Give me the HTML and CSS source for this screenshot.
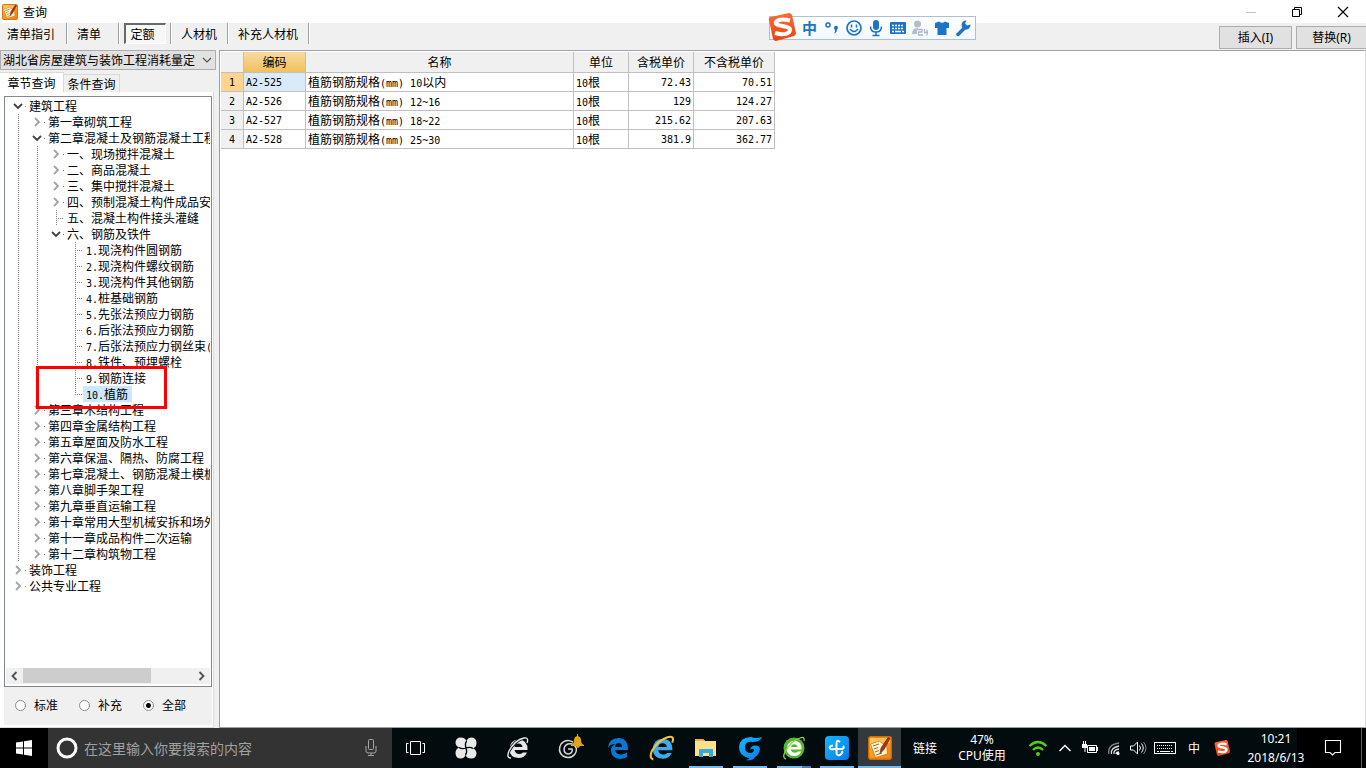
FILE: index.html
```html
<!DOCTYPE html>
<html lang="zh-CN">
<head>
<meta charset="utf-8">
<title>查询</title>
<link rel="stylesheet" href="styles.css">
</head>
<body>
<svg class="defs" aria-hidden="true">
  <defs>
    <linearGradient id="gOrange" x1="0" y1="0" x2="1" y2="1"><stop offset="0" stop-color="#ffb91a"/><stop offset="1" stop-color="#f08010"/></linearGradient>
    <linearGradient id="gRed" x1="0" y1="0" x2="0" y2="1"><stop offset="0" stop-color="#fc6a35"/><stop offset="1" stop-color="#ea4310"/></linearGradient>
    <linearGradient id="gBlue" x1="0" y1="0" x2="1" y2="1"><stop offset="0" stop-color="#12b7ff"/><stop offset="1" stop-color="#0b7ae8"/></linearGradient>
    <symbol id="note" viewBox="0 0 24 24">
      <rect x="0.7" y="0.7" width="22.6" height="22.6" rx="2" fill="url(#gOrange)" stroke="#d9660f" stroke-width="1.4"/>
      <path d="M2 2h20v5L2 12z" fill="#ffe08a" opacity=".5"/>
      <path d="M2.500 8l9-3 2 2 5 1 1 10-12 3.500z" fill="#fff3d2" stroke="#c96d15" stroke-width=".7"/>
      <path d="M5 10l6-2M6 13l4-1.500M7 16l4-1.500M8 19l6-2" stroke="#9c6a35" stroke-width="1"/>
      <path d="M20 1.500l2 1-6 11-4 4 1-5.500z" fill="#a8330f" stroke="#6a1d08" stroke-width=".6"/>
    </symbol>
    <symbol id="sogou" viewBox="0 0 28 28">
      <path d="M1 7Q0 5 3 4L21 0Q23 0 24 2L28 20Q28 22 26 23L8 28Q6 28 5 26Z" fill="url(#gRed)"/>
      <path d="M22 7.500Q11 5 8 9C6 14 22 12 22 17C21 22 13 22 7 20" fill="none" stroke="#fff" stroke-width="4"/>
    </symbol>
    <symbol id="right" viewBox="0 0 10 10"><path d="M3 1l4 4-4 4" fill="none" stroke="#a3a3a3" stroke-width="1.8"/></symbol>
    <symbol id="down" viewBox="0 0 10 10"><path d="M1 3l4 4 4-4" fill="none" stroke="#404040" stroke-width="1.8"/></symbol>
    <symbol id="ering" viewBox="0 0 24 24">
      <path d="M21.500 14H8.500Q9.500 18 13 18Q15.500 18 17 16.500H21Q18.500 22 12.500 22Q3.500 21.500 3.500 13Q4 4 12.500 3.500Q22 4 21.500 14ZM8.500 11H16.500Q16 7.500 12.500 7.500Q9 7.500 8.500 11Z" fill-rule="evenodd"/>
    </symbol>
  </defs>
</svg>

<header class="titlebar">
  <svg class="app-icon"><use href="#note"/></svg>
  <h1>查询</h1>
  <div class="win-controls">
    <button aria-label="最小化"><svg width="12" height="12"><path d="M1 6.500h10" stroke="#c4c4c4"/></svg></button>
    <button aria-label="还原"><svg width="12" height="12"><path d="M1.500 3.500h7v7h-7zM3.500 3.500v-2h7v7h-2" fill="none" stroke="#000"/></svg></button>
    <button aria-label="关闭"><svg width="12" height="12"><path d="M1 1l10 10M11 1L1 11" stroke="#000" stroke-width="1.200"/></svg></button>
  </div>
</header>

<nav class="toolbar">
  <button class="tool first">清单指引</button>
  <button class="tool short">清单</button>
  <span class="tool-slot"><button class="pressed">定额</button></span>
  <button class="tool">人材机</button>
  <button class="tool">补充人材机</button>
  <div class="actions">
    <button>插入<span class="key">(I)</span></button>
    <button>替换<span class="key">(R)</span></button>
  </div>
</nav>

<main class="workspace">
  <aside class="side">
    <div class="combo">
      <select aria-label="定额库"><option>湖北省房屋建筑与装饰工程消耗量定</option></select>
      <svg width="10" height="10"><path d="M1 3l4 4 4-4" fill="none" stroke="#555" stroke-width="1.200"/></svg>
    </div>
    <div class="tabs">
      <button class="tab active">章节查询</button>
      <button class="tab">条件查询</button>
    </div>
    <section class="page">
      <div class="tree-box">
        <div class="tree-view">
        <ul class="tree">
          <li><div class="row"><span class="tg"><svg><use href="#down"/></svg></span><span class="lb">建筑工程</span></div>
            <ul class="line">
              <li><div class="row"><span class="tg"><svg><use href="#right"/></svg></span><span class="lb">第一章砌筑工程</span></div></li>
              <li><div class="row"><span class="tg"><svg><use href="#down"/></svg></span><span class="lb">第二章混凝土及钢筋混凝土工程</span></div>
                <ul class="line">
                  <li><div class="row"><span class="tg"><svg><use href="#right"/></svg></span><span class="lb">一、现场搅拌混凝土</span></div></li>
                  <li><div class="row"><span class="tg"><svg><use href="#right"/></svg></span><span class="lb">二、商品混凝土</span></div></li>
                  <li><div class="row"><span class="tg"><svg><use href="#right"/></svg></span><span class="lb">三、集中搅拌混凝土</span></div></li>
                  <li><div class="row"><span class="tg"><svg><use href="#right"/></svg></span><span class="lb">四、预制混凝土构件成品安</span></div></li>
                  <li><div class="row"><span class="tg leaf"></span><span class="lb">五、混凝土构件接头灌缝</span></div></li>
                  <li><div class="row"><span class="tg"><svg><use href="#down"/></svg></span><span class="lb">六、钢筋及铁件</span></div>
                    <ul>
                      <li><div class="row"><span class="tg leaf"></span><span class="lb"><span class="n">1.</span>现浇构件圆钢筋</span></div></li>
                      <li><div class="row"><span class="tg leaf"></span><span class="lb"><span class="n">2.</span>现浇构件螺纹钢筋</span></div></li>
                      <li><div class="row"><span class="tg leaf"></span><span class="lb"><span class="n">3.</span>现浇构件其他钢筋</span></div></li>
                      <li><div class="row"><span class="tg leaf"></span><span class="lb"><span class="n">4.</span>桩基础钢筋</span></div></li>
                      <li><div class="row"><span class="tg leaf"></span><span class="lb"><span class="n">5.</span>先张法预应力钢筋</span></div></li>
                      <li><div class="row"><span class="tg leaf"></span><span class="lb"><span class="n">6.</span>后张法预应力钢筋</span></div></li>
                      <li><div class="row"><span class="tg leaf"></span><span class="lb"><span class="n">7.</span>后张法预应力钢丝束<span class="n">(</span></span></div></li>
                      <li><div class="row"><span class="tg leaf"></span><span class="lb"><span class="n">8.</span>铁件、预埋螺栓</span></div></li>
                      <li><div class="row"><span class="tg leaf"></span><span class="lb"><span class="n">9.</span>钢筋连接</span></div></li>
                      <li><div class="row"><span class="tg leaf last"></span><span class="lb selected"><span class="n">10.</span>植筋</span></div></li>
                    </ul>
                  </li>
                </ul>
              </li>
              <li><div class="row"><span class="tg"><svg><use href="#right"/></svg></span><span class="lb">第三章木结构工程</span></div></li>
              <li><div class="row"><span class="tg"><svg><use href="#right"/></svg></span><span class="lb">第四章金属结构工程</span></div></li>
              <li><div class="row"><span class="tg"><svg><use href="#right"/></svg></span><span class="lb">第五章屋面及防水工程</span></div></li>
              <li><div class="row"><span class="tg"><svg><use href="#right"/></svg></span><span class="lb">第六章保温、隔热、防腐工程</span></div></li>
              <li><div class="row"><span class="tg"><svg><use href="#right"/></svg></span><span class="lb">第七章混凝土、钢筋混凝土模板</span></div></li>
              <li><div class="row"><span class="tg"><svg><use href="#right"/></svg></span><span class="lb">第八章脚手架工程</span></div></li>
              <li><div class="row"><span class="tg"><svg><use href="#right"/></svg></span><span class="lb">第九章垂直运输工程</span></div></li>
              <li><div class="row"><span class="tg"><svg><use href="#right"/></svg></span><span class="lb">第十章常用大型机械安拆和场外</span></div></li>
              <li><div class="row"><span class="tg"><svg><use href="#right"/></svg></span><span class="lb">第十一章成品构件二次运输</span></div></li>
              <li><div class="row"><span class="tg"><svg><use href="#right"/></svg></span><span class="lb">第十二章构筑物工程</span></div></li>
            </ul>
          </li>
          <li><div class="row"><span class="tg"><svg><use href="#right"/></svg></span><span class="lb">装饰工程</span></div></li>
          <li><div class="row"><span class="tg"><svg><use href="#right"/></svg></span><span class="lb">公共专业工程</span></div></li>
        </ul>
        </div>
        <div class="scroll">
          <svg width="17" height="16"><path d="M10.500 4l-4 4 4 4" fill="none" stroke="#505050" stroke-width="1.800"/></svg>
          <span class="track"><span class="thumb"></span></span>
          <svg width="17" height="16"><path d="M6.500 4l4 4-4 4" fill="none" stroke="#505050" stroke-width="1.800"/></svg>
        </div>
        <div class="marker"></div>
      </div>
      <div class="filters">
        <label><input type="radio" name="scope">标准</label>
        <label><input type="radio" name="scope">补充</label>
        <label><input type="radio" name="scope" checked>全部</label>
      </div>
    </section>
  </aside>

  <section class="grid-pane">
    <table>
      <colgroup><col class="c-no"><col class="c-code"><col class="c-name"><col class="c-unit"><col class="c-price"><col class="c-net"></colgroup>
      <thead><tr><th></th><th class="sorted">编码</th><th>名称</th><th>单位</th><th>含税单价</th><th>不含税单价</th></tr></thead>
      <tbody>
        <tr><th class="n current">1</th><td class="n focus">A2-525</td><td>植筋钢筋规格<span class="n">(mm) 10</span>以内</td><td><span class="n">10</span>根</td><td class="n num">72.43</td><td class="n num">70.51</td></tr>
        <tr><th class="n">2</th><td class="n">A2-526</td><td>植筋钢筋规格<span class="n">(mm) 12~16</span></td><td><span class="n">10</span>根</td><td class="n num">129</td><td class="n num">124.27</td></tr>
        <tr><th class="n">3</th><td class="n">A2-527</td><td>植筋钢筋规格<span class="n">(mm) 18~22</span></td><td><span class="n">10</span>根</td><td class="n num">215.62</td><td class="n num">207.63</td></tr>
        <tr><th class="n">4</th><td class="n">A2-528</td><td>植筋钢筋规格<span class="n">(mm) 25~30</span></td><td><span class="n">10</span>根</td><td class="n num">381.9</td><td class="n num">362.77</td></tr>
      </tbody>
    </table>
  </section>
</main>

<div class="ime">
  <svg class="ime-logo"><use href="#sogou"/></svg>
  <span class="ime-lang">中</span>
  <svg viewBox="0 0 20 18"><circle cx="6" cy="6" r="2" fill="none" stroke="#1b74c6" stroke-width="1.500"/><path d="M12 8.500a2 2 0 1 1 3 2q0 3-3 4 1.500-2 1-3.500-1-1-1-2.500z" fill="#1b74c6"/></svg>
  <svg viewBox="0 0 20 18"><circle cx="10" cy="9" r="7" fill="none" stroke="#1b74c6" stroke-width="1.700"/><path d="M7.500 5.500v3M12.500 5.500v3" stroke="#1b74c6" stroke-width="1.600"/><path d="M6 10q4 5 8 0" fill="none" stroke="#1b74c6" stroke-width="1.400"/></svg>
  <svg viewBox="0 0 20 18"><rect x="7" y="1" width="6" height="10" rx="3" fill="#1b74c6"/><path d="M4.500 7.500q0 5.500 5.500 5.500t5.500-5.500M10 13v3M6.500 16.500h7" fill="none" stroke="#1b74c6" stroke-width="1.600"/></svg>
  <svg viewBox="0 0 20 18"><rect x="2" y="3" width="16" height="12" rx="1" fill="#1b74c6"/><path d="M4 6.500h12M4 9.500h12" stroke="#fff" stroke-width="1.600" stroke-dasharray="2 1"/><path d="M4 12.500h2M7 12.500h6M14 12.500h2" stroke="#fff" stroke-width="1.600"/></svg>
  <svg viewBox="0 0 20 18"><circle cx="7.500" cy="5" r="3.500" fill="#b4bdcb"/><path d="M2 15q0-6 6-6 4 0 5 2l-6 4z" fill="#b4bdcb"/><path d="M8 10.500h4v2.500H8.500V16H13M14.500 10V13.500h3.500M17 10.500v6" fill="none" stroke="#fff" stroke-width="3"/><path d="M8 10.500h4v2.500H8.500V16H13M14.500 10V13.500h3.500M17 10.500v6" fill="none" stroke="#aab4c4" stroke-width="1.300"/></svg>
  <svg viewBox="0 0 20 18"><path d="M7 2.500q3 2.500 6 0l4 1.500v5h-2.500v7h-9V9H3V4z" fill="#1b74c6"/></svg>
  <svg viewBox="0 0 20 18"><path d="M4 15.500l7-7" stroke="#1b74c6" stroke-width="3.500" stroke-linecap="round"/><path d="M16.500 5.500a4.500 4.500 0 1 1-4-4l-1.500 3 2 2z" fill="#1b74c6"/></svg>
</div>

<footer class="taskbar">
  <button class="start" aria-label="开始"><svg width="16" height="16"><path d="M0 2.500l7-1v6H0zM8 1.300L16 0v7.500H8zM0 8.500h7v6l-7-1zM8 8.500h8V16l-8-1.300z" fill="#fff"/></svg></button>
  <div class="search">
    <svg width="22" height="22"><circle cx="11" cy="11" r="9" fill="none" stroke="#fff" stroke-width="3"/></svg>
    <input type="text" aria-label="搜索" placeholder="在这里输入你要搜索的内容">
    <svg width="12" height="18"><rect x="3.500" y=".5" width="5" height="10" rx="1" fill="none" stroke="#a5a5a5"/><path d="M1 7v5q0 2 2 2h6q2 0 2-2V7M6 14v3M3 16.500h6" fill="none" stroke="#a5a5a5"/></svg>
  </div>
  <button class="task view" aria-label="任务视图"><svg width="22" height="16"><path d="M5.500 1.500h10v13h-10zM3.500 3.500h-2v9h2M17.500 3.500h2v9h-2" fill="none" stroke="#fff"/></svg></button>
  <button class="task wide" aria-label="应用"><svg width="24" height="24" viewBox="0 0 24 24"><g fill="#e9e9e9"><path d="M12 12Q2 13 1.500 7Q1.500 1.500 7 1.500Q11 1.500 12.500 5Q10.500 8 12 12z"/><path d="M12 12Q11 2 17 1.500Q22.500 1.500 22.500 7Q22.500 11 19 12.500Q16 10.500 12 12z"/><path d="M12 12Q22 11 22.500 17Q22.500 22.500 17 22.500Q13 22.500 11.500 19Q13.500 16 12 12z"/><path d="M12 12Q13 22 7 22.500Q1.500 22.500 1.500 17Q1.500 13 5 11.500Q8 13.500 12 12z"/></g><path d="M5 11.500Q8 13.500 12 12Q16 10.500 19 12.500M12.500 5Q10.500 8 12 12Q13.500 16 11.500 19" fill="none" stroke="#020c0f" stroke-width="1.300"/></svg></button>
  <button class="task wide" aria-label="浏览器"><svg width="24" height="24"><use href="#ering" fill="#e8e8e8"/><path d="M5 22Q0 22 3 15Q9 4 18 2Q23 1 21 7" fill="none" stroke="#020c0f" stroke-width="3"/><path d="M5 22Q0 22 3 15Q9 4 18 2Q23 1 21 7" fill="none" stroke="#e8e8e8" stroke-width="1.400"/></svg></button>
  <button class="task wide" aria-label="通知"><svg width="28" height="28"><path d="M17 8Q10 4 5 10Q1 17 7 22Q14 26 19 20Q23 13 16 10Q9 9 8 15Q8 20 13 20Q17 19 16 15L12 15" fill="none" stroke="#d7d7d7" stroke-width="1.500"/><path d="M15 11q3-1 3-5 0-3 3-4V0h1v2q3 1 3 4 0 4 3 5v1H15zM20 12h4q-2 4-4 0z" fill="#dfa313"/></svg></button>
  <button class="task" aria-label="Edge"><svg width="24" height="24"><path d="M2 12Q3 2 12.500 2Q22 2 22 14H9Q10 18.500 15 18.500Q18 18.500 21 16.500V21Q18 23 13.500 23Q5 22 5 14Q5 11 9 8Q4 8 2 12ZM9 11H16Q16 7 12.500 7Q9.500 7 9 11Z" fill="#0878d4" fill-rule="evenodd"/></svg></button>
  <button class="task" aria-label="Internet Explorer"><svg width="26" height="26" viewBox="0 0 24 24"><use href="#ering" fill="#3fa9ee"/><path d="M4 22.500Q0 22 2.500 15Q8 5 17 2Q24 0 21.500 7" fill="none" stroke="#f5c330" stroke-width="1.900"/></svg></button>
  <button class="task open" aria-label="文件资源管理器"><svg width="24" height="24"><path d="M1 3h8l2 2h11v15H1z" fill="#ffe08a"/><path d="M1 3h8l2 2H1z" fill="#e9b13b"/><path d="M5 21v-8h14v8h-4v-4H9v4z" fill="#35a9e0"/></svg></button>
  <button class="task open" aria-label="广联达"><svg width="26" height="26"><path d="M25 2Q23 7 16 7Q8 6 8 12Q8 18 14 18Q17 17 17 14.500Q15 13 13 15Q14 10 19 10.500Q23 11 23 14Q22 20 18 22Q16 26 9 25Q13 24 12 23Q2 21 2 12Q3 2 14 2Q20 4 25 2Z" fill="url(#gBlue)"/></svg></button>
  <button class="task open split" aria-label="安全浏览器"><svg width="24" height="24"><circle cx="12" cy="12" r="10.500" fill="#54b82d"/><g transform="translate(2 2) scale(.82)"><use href="#ering" width="24" height="24" fill="#fff"/></g><path d="M4 23Q0 22 3 16Q9 5 18 2Q23 0 22 5" fill="none" stroke="#7fd957" stroke-width="1.300"/></svg></button>
  <button class="task open" aria-label="云助手"><svg width="24" height="24"><rect width="24" height="24" rx="4" fill="url(#gBlue)"/><path d="M15 6Q12 3 11.500 7V17Q12 20 15 19Q18 17 17 15M8 9.500Q4 10 5 12.500Q6 14 9 13H17Q20 12 18 10" fill="none" stroke="#fff" stroke-width="2"/></svg></button>
  <button class="task open current-app" aria-label="查询"><svg width="24" height="24"><use href="#note"/></svg></button>
  <div class="tray">
    <span class="links">链接</span>
    <span class="cpu"><span>47%</span><span>CPU使用</span></span>
    <span class="ti"><svg width="20" height="18"><g fill="none" stroke="#4fd013" stroke-width="2.400"><path d="M1.500 7Q10-1 18.500 7M5 11Q10 6 15 11"/></g><circle cx="10" cy="15" r="2" fill="#4fd013"/></svg></span>
    <span class="ti"><svg width="14" height="10"><path d="M1.500 8L7 2.500 12.500 8" fill="none" stroke="#fff" stroke-width="1.400"/></svg></span>
    <span class="ti"><svg width="18" height="16"><path d="M6.500 5.500h9v7h-9z" fill="none" stroke="#fff"/><path d="M8 7h6v4H8zM16 7h1v4h-1zM1 4h5v4H4.500v4h-1V8H1zM2 1h1v3H2zM4 1h1v3H4z" fill="#fff"/></svg></span>
    <span class="ti"><svg width="16" height="16"><g fill="none" stroke="#ddd" stroke-width="1.300"><path d="M3 14Q1 5 13 3" opacity=".6"/><path d="M5.500 14Q4 8 13 6M8 14Q7 10 13 9M10 14Q10 12 13 12"/></g><circle cx="12" cy="13.500" r="1.500" fill="#fff"/></svg></span>
    <span class="ti"><svg width="18" height="16"><path d="M1.500 6h3l4-4v12l-4-4h-3z" fill="none" stroke="#fff"/><path d="M10.500 5.500q2 2.500 0 5M12.500 3.500q3.500 4.500 0 9" fill="none" stroke="#fff"/><path d="M14.500 2q5 6 0 12" fill="none" stroke="#888"/></svg></span>
    <span class="ti kb"><svg width="24" height="14"><rect x="1.500" y="1.500" width="21" height="11" fill="none" stroke="#fff"/><path d="M4 4.500h16M4 7.500h16" stroke="#fff" stroke-dasharray="1 1"/><path d="M4 10.500h2M7 10.500h10M18 10.500h2" stroke="#fff"/></svg></span>
    <span class="ti zh">中</span>
    <span class="ti zh"><svg width="16" height="16"><use href="#sogou"/></svg></span>
    <time class="clock"><span>10:21</span><span>2018/6/13</span></time>
    <button class="notice" aria-label="操作中心"><svg width="18" height="18"><path d="M1.500 1.500h15v12H11L8.500 16 6 13.500H1.500z" fill="none" stroke="#fff" stroke-width="1.100"/></svg></button>
    <span class="desktop"></span>
  </div>
</footer>
</body>
</html>
```
FILE: styles.css
```css
* { box-sizing: border-box; }
body {
  margin: 0;
  height: 100vh;
  display: flex;
  flex-direction: column;
  overflow: hidden;
  background: #f0f0f0;
  color: #000;
  font: 12px/16px "Noto Sans CJK SC", sans-serif;
}
button, input, select { font: inherit; color: inherit; }
button { border: 0; padding: 0; background: none; }
svg { display: block; flex: none; }
.defs { position: absolute; width: 0; height: 0; }
.n { font-family: "DejaVu Sans Mono", "Liberation Mono", monospace; font-size: 10px; }

/* Title bar */
.titlebar { display: flex; align-items: center; height: 23px; padding-left: 2px; background: #fff; flex: none; }
.app-icon { width: 16px; height: 16px; }
.titlebar h1 { margin: 0 0 0 5px; font-size: 12px; font-weight: 400; }
.win-controls { display: flex; margin-left: auto; height: 20px; }
.win-controls button { width: 46px; display: flex; align-items: center; justify-content: center; }

/* Toolbar */
.toolbar { display: flex; height: 27px; flex: none; }
.tool, .tool-slot { height: 21px; border-right: 1px solid #a0a0a0; box-shadow: 1px 0 #fff; margin-right: 1px; }
.tool { padding: 0 10px 0 9px; text-align: left; }
.tool.first { padding: 0 11px 0 7px; }
.tool.short { width: 51px; }
.tool-slot { padding: 0 4px; }
.pressed {
  width: 42px;
  height: 21px;
  padding-right: 6px;
  border: 1px solid #fff;
  border-top: 2px solid #696969;
  border-left: 2px solid #696969;
  background: #f7f7f7;
}
.actions { display: flex; gap: 4px; margin-left: auto; padding-top: 3px; }
.actions button { width: 73px; height: 23px; border: 1px solid #adadad; background: #e1e1e1; }
.actions button:last-child { width: 70px; border-right: 0; }
.key { font-family: "Noto Sans", sans-serif; }

/* Left column */
.workspace { display: flex; flex: 1; min-height: 0; }
.side { width: 219px; padding-right: 3px; display: flex; flex-direction: column; flex: none; }
.combo { display: flex; align-items: center; height: 20px; border: 1px solid #adadad; background: #e1e1e1; }
.combo select { appearance: none; flex: 1; min-width: 0; border: 0; padding: 0 2px; background: none; overflow: hidden; }
.combo svg { margin-right: 3px; }
.tabs { display: flex; align-items: flex-end; height: 22px; }
.tab { width: 56px; height: 18px; border: 1px solid #d9d9d9; border-bottom: 0; border-left: 0; text-align: center; }
.tab.active { width: 64px; height: 20px; background: #fff; }
.page {
  flex: 1;
  min-height: 0;
  display: flex;
  flex-direction: column;
  margin-right: 2px;
  padding: 4px 1px 2px 4px;
  border: 1px solid #dcdcdc;
  border-width: 0 1px 1px 0;
  background: #fff;
}
.tree-box {
  position: relative;
  flex: 1;
  min-height: 0;
  display: flex;
  flex-direction: column;
  padding: 1px;
  border: 1px solid #828790;
}
.tree-view { flex: 1; min-height: 0; overflow: hidden; }
.tree, .tree ul { margin: 0; padding: 0; list-style: none; }
.tree { padding-left: 3px; }
.tree ul { padding-left: 19px; }
.tree .line { background: repeating-linear-gradient(#808080 0 1px, transparent 1px 2px) 9px 0 / 1px 100% no-repeat; }
.row { display: flex; height: 16px; white-space: nowrap; }
.tg {
  width: 17px;
  flex: none;
  display: flex;
  align-items: center;
  justify-content: center;
  background: linear-gradient(#808080, #808080) right 8px / 1px 1px no-repeat;
}
.tg svg { width: 10px; height: 10px; }
.leaf {
  background:
    repeating-linear-gradient(#808080 0 1px, transparent 1px 2px) 9px 0 / 1px 100% no-repeat,
    repeating-linear-gradient(90deg, #808080 0 1px, transparent 1px 2px) 9px 8px / 8px 1px no-repeat;
}
.leaf.last { background-size: 1px 9px, 8px 1px; }
.lb { padding: 0 4px 0 3px; }
.selected { background: #cce8ff; }
.scroll { display: flex; height: 16px; background: #f0f0f0; flex: none; margin-bottom: 1px; }
.track { flex: 1; }
.thumb { display: block; width: 75%; height: 15px; background: #cdcdcd; }
.marker {
  position: absolute;
  left: 31px;
  top: 269px;
  width: 131px;
  height: 43px;
  border: 3px solid #f00;
}
.filters { display: flex; align-items: center; gap: 16px; height: 38px; padding: 0 0 2px 11px; background: #f0f0f0; }
.filters label { display: flex; align-items: center; width: 48px; white-space: nowrap; }
.filters input {
  appearance: none;
  width: 11px;
  height: 11px;
  margin: 0 8px 0 0;
  flex: none;
  border: 1px solid #8c8c8c;
  border-radius: 50%;
  background: #fff;
}
.filters input:checked { background: radial-gradient(#000 0 2px, #fff 3px); }

/* Results grid */
.grid-pane { flex: 1; min-width: 0; border: 1px solid #a0a0a8; border-right-color: #dcdcdc; padding: 1px; background: #fff; }
table { width: 554px; table-layout: fixed; border-collapse: separate; border-spacing: 0; line-height: 14px; }
.c-no { width: 23px; }
.c-code { width: 62px; }
.c-name { width: 268px; }
.c-unit { width: 55px; }
.c-price { width: 65px; }
.c-net { width: 81px; }
th, td { height: 19px; padding: 1px 2px 0; border: 1px solid #c0c0c0; border-width: 0 1px 1px 0; font-weight: 400; text-align: left; white-space: nowrap; }
th { background: #f0f0f0; text-align: center; }
thead th { height: 21px; padding-top: 0; }
.sorted { background: linear-gradient(#f9d99f, #f1c15f); }
.current { background: #ffd58d; }
.focus { background: #d9eaf9; }
.num { text-align: right; }

/* Floating input-method bar */
.ime {
  position: absolute;
  right: 390px;
  top: 16px;
  display: flex;
  align-items: center;
  gap: 2px;
  height: 24px;
  padding: 0 1px 0 32px;
  border: 1px solid #aebfd3;
  background: linear-gradient(#fff, #f3f8fd);
}
.ime svg { width: 20px; height: 18px; }
.ime .ime-logo { position: absolute; left: -2px; top: -4px; width: 28px; height: 28px; }
.ime-lang { width: 18px; color: #1b74c6; font-size: 15px; font-weight: 700; }

/* Taskbar */
.taskbar { display: flex; height: 40px; flex: none; background: linear-gradient(to left, #000 69px, #020c0f 69px); color: #fff; }
.taskbar button { display: flex; align-items: center; justify-content: center; }
.start { width: 48px; background: #000; }
.search { width: 344px; display: flex; align-items: center; padding: 0 15px 0 8px; background: #333; }
.search input { flex: 1; min-width: 0; margin-left: 6px; padding: 0; border: 0; background: none; outline: 0; font-size: 14px; }
.search input::placeholder { color: #a0a0a0; opacity: 1; }
.task { width: 44px; border-bottom: 2px solid transparent; border-top: 2px solid transparent; }
.task.view { width: 48px; }
.task.wide { width: 52px; }
.open { background: linear-gradient(#76b9ed, #76b9ed) center bottom / 34px 2px no-repeat; background-origin: border-box; }
.split, .split ~ .open { width: 43px; }
.split { background-image: linear-gradient(90deg, #76b9ed 25px, #4a7fae 25px); }
.taskbar .current-app { background-color: #33393c; background-size: 100% 2px; }
.tray { display: flex; align-items: center; margin-left: auto; text-align: center; }
.links { width: 48px; }
.cpu, .clock { display: flex; flex-direction: column; }
.cpu { width: 66px; margin-right: 9px; }
.ti { width: 24px; display: flex; justify-content: center; }
.ti.kb { width: 30px; }
.ti.zh { width: 28px; }
.ti:nth-child(3), .ti:nth-child(4) { width: 27px; }
.clock { width: 80px; line-height: 19px; }
.cpu, .clock { font-family: "Noto Sans", "Noto Sans CJK SC", sans-serif; }
.notice { width: 34px; height: 40px; margin-right: 11px; }
.desktop { width: 5px; height: 40px; border-left: 1px solid #5c5c5c; }
```
